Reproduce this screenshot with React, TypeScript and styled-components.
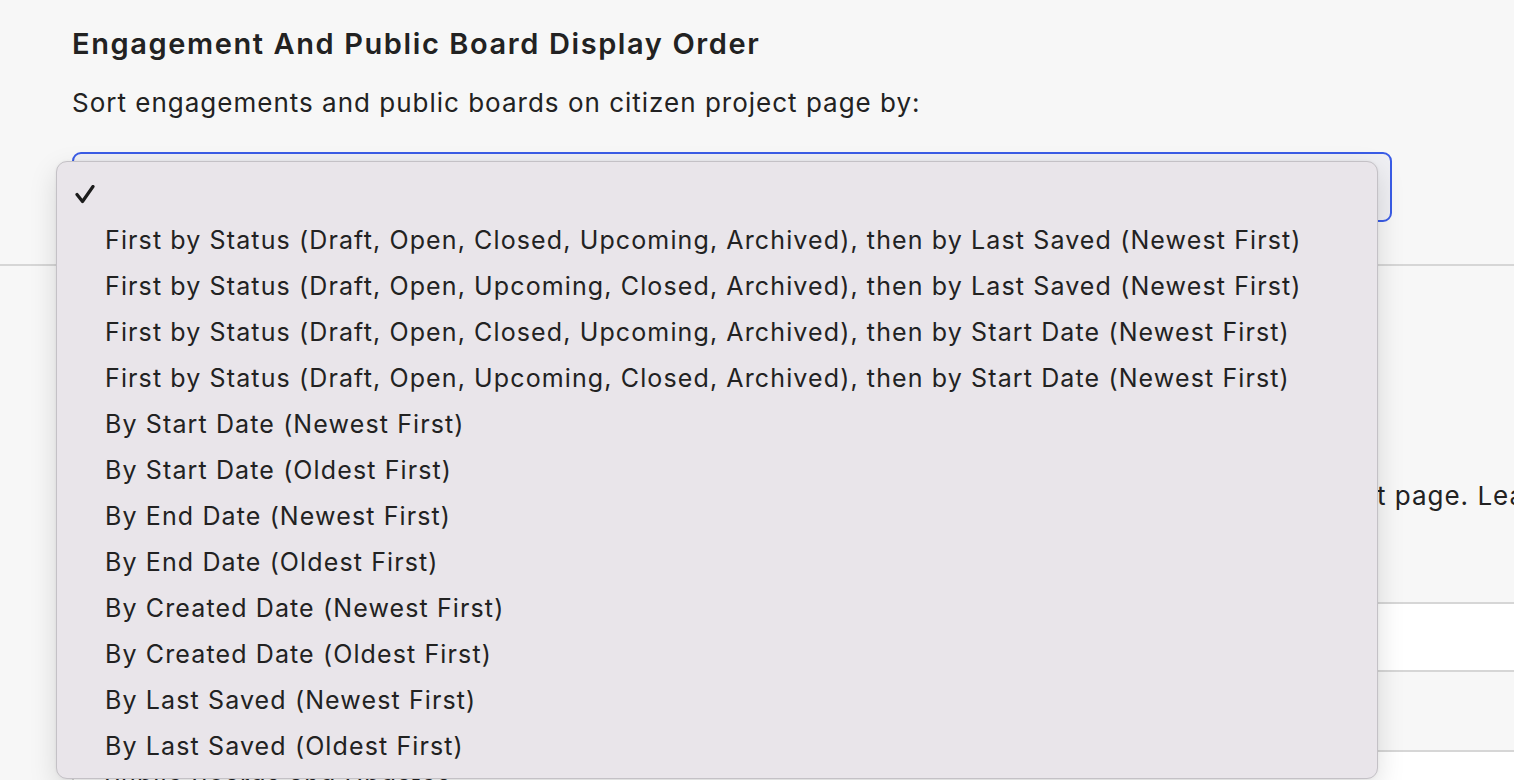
import React from "react";
import styled, { createGlobalStyle } from "styled-components";

const Global = createGlobalStyle`
  html, body { margin: 0; padding: 0; background: #f7f7f7; overflow: hidden; }
  body { font-family: Inter, "Noto Sans", "Liberation Sans", sans-serif; color: #222; }
  #root { width: 1514px; height: 780px; overflow: hidden; position: relative; }
`;

const Page = styled.div`
  width: 2200px;
  display: flex;
  flex-direction: column;
`;

const Section = styled.section`
  padding: 24px 0 0 72px;
  display: flex;
  flex-direction: column;
`;

const Heading = styled.h2`
  margin: 0;
  font-size: 29px;
  line-height: 40px;
  font-weight: 600;
  letter-spacing: 1.6px;
  color: #222;
`;

const Description = styled.p<{ $top?: number }>`
  margin: ${(p) => p.$top ?? 19}px 0 0;
  font-size: 26px;
  line-height: 40px;
  font-weight: 400;
  letter-spacing: 1px;
  color: #222;
  white-space: nowrap;
`;

const SelectWrap = styled.div`
  position: relative;
  margin-top: 29px;
  width: 1320px;
`;

const SelectBox = styled.div`
  box-sizing: border-box;
  width: 1320px;
  height: 70px;
  border: 2px solid #3a5ce6;
  border-radius: 9px;
  background: #efeff3;
`;

const Divider = styled.div`
  margin-top: 42px;
  height: 2px;
  background: #d6d6d6;
`;

const SecondSection = styled.section`
  padding: 0 0 0 72px;
  display: flex;
  flex-direction: column;
`;

const SubHeading = styled.h3`
  margin: 156px 0 0;
  font-size: 29px;
  line-height: 40px;
  font-weight: 600;
  letter-spacing: 1.6px;
`;

const List = styled.div`
  margin-top: 86px;
  margin-left: 72px;
  display: flex;
  flex-direction: column;
  border-top: 2px solid #d6d6d6;
`;

const ListRow = styled.div<{ $h: number; $white?: boolean }>`
  box-sizing: border-box;
  height: ${(p) => p.$h}px;
  background: ${(p) => (p.$white ? "#ffffff" : "#f7f7f7")};
  border-bottom: 2px solid #d6d6d6;
  border-left: 2px solid #d6d6d6;
`;

const LastRow = styled.div`
  box-sizing: border-box;
  height: 80px;
  background: #ffffff;
  border-left: 2px solid #d6d6d6;
  padding: 12px 0 0 30px;
  font-size: 25px;
  line-height: 40px;
  letter-spacing: 1.1px;
  color: #222;
`;

const Menu = styled.div`
  position: absolute;
  left: -16px;
  top: 9px;
  width: 1322px;
  box-sizing: border-box;
  padding: 9px 0;
  background: #e9e5ea;
  border: 1px solid #c4c1c6;
  border-radius: 11px;
  box-shadow: 0 10px 28px rgba(0, 0, 0, 0.13), 0 0 3px rgba(0, 0, 0, 0.06);
  display: flex;
  flex-direction: column;
  z-index: 10;
`;

const Option = styled.div`
  height: 46px;
  display: flex;
  align-items: center;
  font-size: 25px;
  letter-spacing: 1.12px;
  color: #222;
  white-space: nowrap;
`;

const CheckSlot = styled.span`
  width: 48px;
  display: flex;
  justify-content: flex-end;
  padding-right: 10px;
  box-sizing: border-box;
`;

const Check = () => (
  <svg width="20" height="19" viewBox="0 0 20 19" fill="none">
    <path d="M2 9.5 L7.5 16.5 L18 1.5" stroke="#1c1c1c" strokeWidth="3.2" strokeLinecap="round" strokeLinejoin="round" />
  </svg>
);

const options = [
  "",
  "First by Status (Draft, Open, Closed, Upcoming, Archived), then by Last Saved (Newest First)",
  "First by Status (Draft, Open, Upcoming, Closed, Archived), then by Last Saved (Newest First)",
  "First by Status (Draft, Open, Closed, Upcoming, Archived), then by Start Date (Newest First)",
  "First by Status (Draft, Open, Upcoming, Closed, Archived), then by Start Date (Newest First)",
  "By Start Date (Newest First)",
  "By Start Date (Oldest First)",
  "By End Date (Newest First)",
  "By End Date (Oldest First)",
  "By Created Date (Newest First)",
  "By Created Date (Oldest First)",
  "By Last Saved (Newest First)",
  "By Last Saved (Oldest First)",
];

export default function App() {
  return (
    <>
      <Global />
      <Page>
        <Section>
          <Heading>Engagement And Public Board Display Order</Heading>
          <Description>Sort engagements and public boards on citizen project page by:</Description>
          <SelectWrap>
            <SelectBox />
            <Menu role="listbox">
              {options.map((o, i) => (
                <Option key={i} role="option">
                  <CheckSlot>{i === 0 ? <Check /> : null}</CheckSlot>
                  {o}
                </Option>
              ))}
            </Menu>
          </SelectWrap>
        </Section>
        <Divider />
        <SecondSection>
          <SubHeading>Tabs</SubHeading>
          <Description $top={14}>
            Choose which tabs are visible, and set the order in which they are displayed on your citizen project page. Learn more
          </Description>
        </SecondSection>
        <List>
          <ListRow $h={68} $white />
          <ListRow $h={80} />
          <LastRow>Public Boards and Updates</LastRow>
        </List>
      </Page>
    </>
  );
}
